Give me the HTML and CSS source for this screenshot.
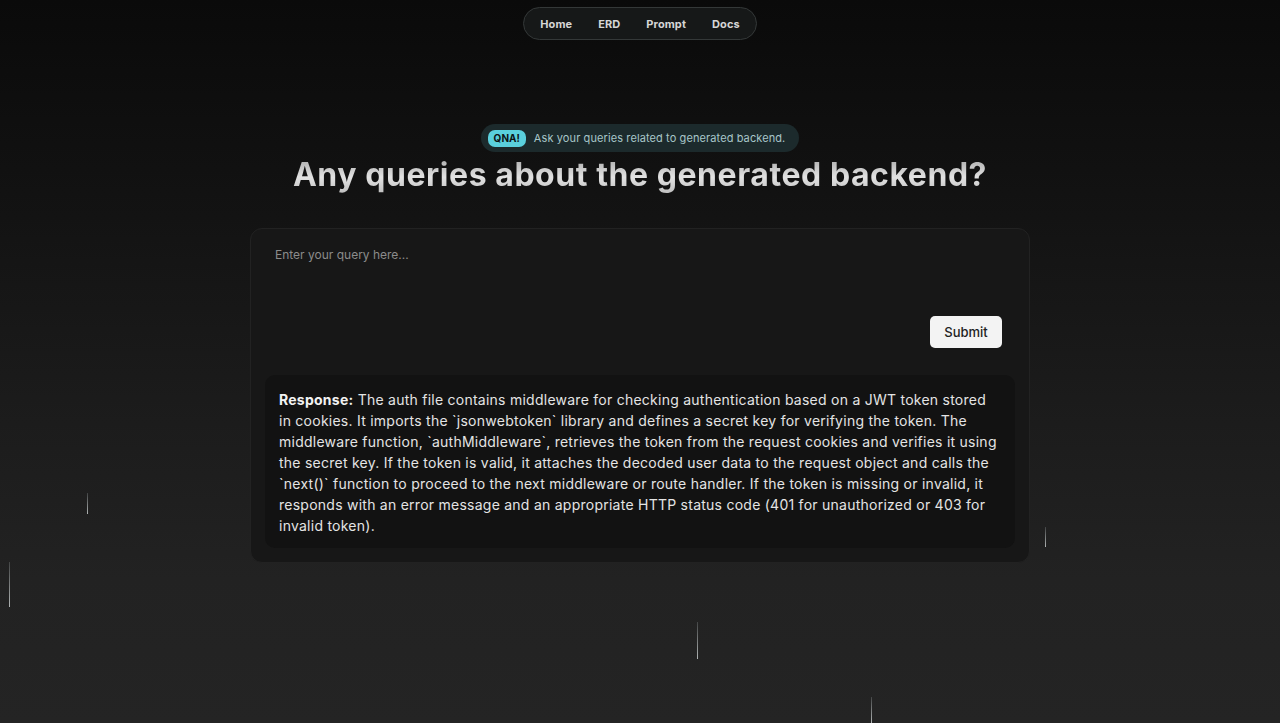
FILE: index.html
```html
<!DOCTYPE html>
<html lang="en">
<head>
<meta charset="utf-8">
<title>QNA</title>
<link rel="stylesheet" href="styles.css">
</head>
<body>
<div class="page">
  <header class="top">
    <nav class="nav">
      <a class="nav-link" href="#">Home</a>
      <a class="nav-link" href="#">ERD</a>
      <a class="nav-link" href="#">Prompt</a>
      <a class="nav-link" href="#">Docs</a>
    </nav>
  </header>

  <main class="main">
    <div class="badge"><span class="chip">QNA!</span><span class="badge-text">Ask your queries related to generated backend.</span></div>
    <h1 class="title">Any queries about the generated backend?</h1>

    <section class="card">
      <textarea class="query" placeholder="Enter your query here..."></textarea>
      <div class="actions"><button class="submit">Submit</button></div>
      <div class="response">
        <p><strong>Response:</strong> The auth file contains middleware for checking authentication based on a JWT token stored in cookies. It imports the `jsonwebtoken` library and defines a secret key for verifying the token. The middleware function, `authMiddleware`, retrieves the token from the request cookies and verifies it using the secret key. If the token is valid, it attaches the decoded user data to the request object and calls the `next()` function to proceed to the next middleware or route handler. If the token is missing or invalid, it responds with an error message and an appropriate HTTP status code (401 for unauthorized or 403 for invalid token).</p>
      </div>
    </section>
  </main>

  <span class="streak s1"></span>
  <span class="streak s2"></span>
  <span class="streak s3"></span>
  <span class="streak s4"></span>
  <span class="streak s5"></span>
</div>
</body>
</html>
```

FILE: styles.css
```css
* { box-sizing: border-box; }
html, body { margin: 0; padding: 0; }
body {
  font-family: "Inter", "Noto Sans", sans-serif;
  background: #101010;
  color: #e6e6e6;
}
.page {
  position: relative;
  min-height: 723px;
  height: 723px;
  overflow: hidden;
  background: linear-gradient(180deg, #0a0a0a 0%, #131313 30%, #1b1b1b 55%, #222 80%, #242424 100%);
}
.top {
  display: flex;
  justify-content: center;
  padding-top: 7px;
}
.nav {
  display: flex;
  align-items: center;
  gap: 26px;
  height: 33px;
  padding: 0 16px 0 16px;
  border: 1px solid #343838;
  border-radius: 17px;
  background: #161818;
}
.nav-link {
  color: #d6d6d6;
  text-decoration: none;
  font-size: 11px;
  font-weight: 700;
  letter-spacing: 0.1px;
}

.main {
  display: flex;
  flex-direction: column;
  align-items: center;
  padding-top: 84px;
}
.badge {
  display: flex;
  align-items: center;
  gap: 8px;
  height: 28px;
  padding: 0 14px 0 7px;
  border-radius: 14px;
  background: #1c2a2c;
}
.chip {
  background: #5ad0dd;
  color: #0d1416;
  font-size: 10px;
  font-weight: 700;
  padding: 2px 6px;
  border-radius: 7px;
  line-height: 13px;
}
.badge-text {
  color: #a8c6c9;
  font-size: 11px;
  letter-spacing: 0.1px;
}
.title {
  margin: 0;
  font-size: 32px;
  font-weight: 700;
  letter-spacing: 0.55px;
  line-height: 46px;
  background: linear-gradient(180deg, #9a9a9a 0%, #e2e2e2 55%, #b5b5b5 100%);
  -webkit-background-clip: text;
  background-clip: text;
  color: transparent;
}
.card {
  width: 780px;
  margin-top: 30px;
  padding: 0 14px 14px;
  border: 1px solid #222;
  border-radius: 12px;
  background: #171717;
  display: flex;
  flex-direction: column;
}
.query {
  height: 87px;
  resize: none;
  border: none;
  outline: none;
  background: transparent;
  color: #ddd;
  font-family: inherit;
  font-size: 12px;
  padding: 18px 10px 0;
}
.query::placeholder { color: #8b8b8b; }
.actions {
  display: flex;
  justify-content: flex-end;
  padding-right: 13px;
}
.submit {
  width: 72px;
  height: 32px;
  border: none;
  border-radius: 5px;
  background: #f3f3f3;
  color: #222;
  font-family: inherit;
  font-size: 13px;
  font-weight: 500;
}
.response {
  margin-top: 27px;
  background: #121212;
  border-radius: 10px;
  padding: 14px 15px 12px 14px;
}
.response p {
  margin: 0;
  font-size: 14px;
  line-height: 21px;
  letter-spacing: 0.25px;
  color: #e4e4e4;
}
.response strong { color: #f2f2f2; font-weight: 700; }

.streak {
  position: absolute;
  width: 1px;
  background: linear-gradient(180deg, rgba(200,210,212,0.2), rgba(210,215,215,0.8));
}
.s1 { left: 87px; top: 493px; height: 21px; }
.s2 { left: 9px; top: 562px; height: 45px; }
.s3 { left: 697px; top: 622px; height: 37px; }
.s4 { left: 1045px; top: 527px; height: 20px; }
.s5 { left: 871px; top: 697px; height: 26px; }
```
